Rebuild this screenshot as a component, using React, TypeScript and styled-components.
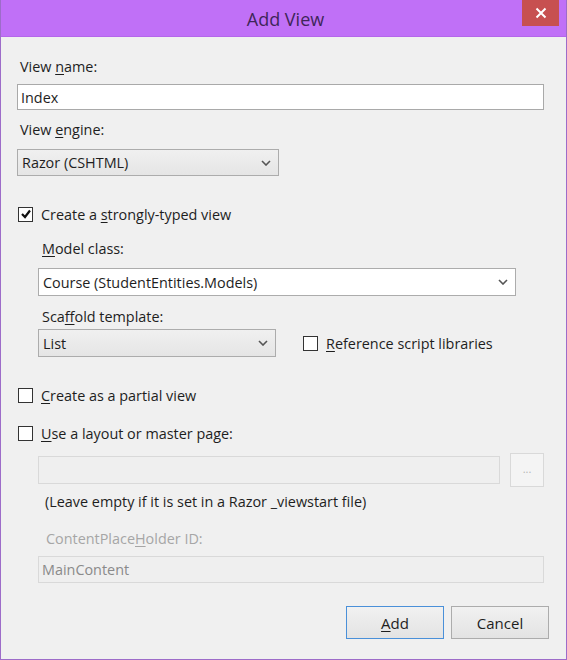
import React from "react";
import styled, { createGlobalStyle } from "styled-components";

const Global = createGlobalStyle`
  html, body { margin: 0; padding: 0; background: #f0f0f0; }
  body { font-family: "Open Sans", "Noto Sans", sans-serif; }
  * { box-sizing: border-box; }
`;

const Window = styled.div`
  width: 567px;
  height: 660px;
  display: flex;
  flex-direction: column;
  background: #f0f0f0;
  border: 1px solid #9d6cc9;
  border-top: none;
  font-family: "Open Sans", sans-serif;
  font-size: 14.4px;
  color: #1e1e1e;
`;

const TitleBar = styled.div`
  height: 37px;
  flex: none;
  background: #c070f7;
  display: flex;
  align-items: center;
  justify-content: center;
  position: relative;
  border-bottom: 1px solid #b466ea;
`;

const Title = styled.div`
  font-size: 18px;
  color: #3e2659;
  margin-left: 4px;
  margin-top: 1px;
`;

const CloseButton = styled.div`
  position: absolute;
  top: 0;
  right: 7px;
  width: 37px;
  height: 26px;
  background: #c75050;
  display: flex;
  align-items: center;
  justify-content: center;
`;

const Body = styled.div`
  flex: 1;
  display: flex;
  flex-direction: column;
  padding: 0 22px 0 16px;
`;

const Label = styled.div<{ $mt: number; $ml?: number; $disabled?: boolean }>`
  margin-top: ${(p) => p.$mt}px;
  margin-left: ${(p) => p.$ml ?? 3}px;
  height: 20px;
  line-height: 20px;
  color: ${(p) => (p.$disabled ? "#a6a6a6" : "#1e1e1e")};
  white-space: nowrap;
`;

const U = styled.span`
  text-decoration: underline;
  text-underline-offset: 2px;
`;

const TextBox = styled.div<{ $mt: number; $indent?: boolean; $disabled?: boolean; $h?: number }>`
  margin-top: ${(p) => p.$mt}px;
  margin-left: ${(p) => (p.$indent ? 21 : 0)}px;
  height: ${(p) => p.$h ?? 26}px;
  background: ${(p) => (p.$disabled ? "#efefef" : "#ffffff")};
  border: 1px solid ${(p) => (p.$disabled ? "#d9d9d9" : "#a9a9a9")};
  padding-left: 3px;
  display: flex;
  align-items: center;
  color: ${(p) => (p.$disabled ? "#8a8a8a" : "#1e1e1e")};
`;

const Select = styled.div<{ $mt: number; $w?: number; $indent?: boolean; $white?: boolean; $h?: number; $mr?: number }>`
  margin-top: ${(p) => p.$mt}px;
  margin-left: ${(p) => (p.$indent ? 21 : 0)}px;
  margin-right: ${(p) => p.$mr ?? 0}px;
  width: ${(p) => (p.$w ? `${p.$w}px` : "auto")};
  height: ${(p) => p.$h ?? 27}px;
  flex: none;
  border: 1px solid #acacac;
  background: ${(p) => (p.$white ? "#ffffff" : "linear-gradient(#f0f0f0, #e5e5e5)")};
  display: flex;
  align-items: center;
  justify-content: space-between;
  padding: 0 7px 0 4px;
`;

const CheckRow = styled.div<{ $mt: number }>`
  margin-top: ${(p) => p.$mt}px;
  height: 20px;
  display: flex;
  align-items: center;
  gap: 8px;
  margin-left: 1px;
  white-space: nowrap;
`;

const Box = styled.div`
  width: 15px;
  height: 15px;
  border: 1px solid #333;
  background: #fff;
  display: flex;
  align-items: center;
  justify-content: center;
  flex: none;
`;

const ScaffoldRow = styled.div`
  margin-top: 2px;
  margin-left: 21px;
  display: flex;
  align-items: center;
  gap: 27px;
`;

const InlineCheck = styled.div`
  display: flex;
  align-items: center;
  gap: 8px;
  white-space: nowrap;
`;

const LayoutRow = styled.div`
  margin-top: 10px;
  margin-left: 21px;
  height: 34px;
  display: flex;
  align-items: center;
  gap: 10px;
`;

const DisabledField = styled.div`
  flex: 1;
  height: 28px;
  background: #efefef;
  border: 1px solid #d9d9d9;
`;

const BrowseButton = styled.div`
  width: 34px;
  height: 34px;
  border: 1px solid #d9d9d9;
  background: #f4f4f4;
  color: #b5b5b5;
  font-size: 11px;
  display: flex;
  align-items: center;
  justify-content: center;
  padding-bottom: 4px;
`;

const Note = styled.div`
  margin-top: 5px;
  margin-left: 28px;
  height: 20px;
  line-height: 20px;
  white-space: nowrap;
`;

const ButtonRow = styled.div`
  margin-top: 23px;
  display: flex;
  justify-content: flex-end;
  gap: 7px;
  margin-right: -5px;
`;

const Button = styled.div<{ $default?: boolean }>`
  width: 98px;
  height: 33px;
  border: 1px solid ${(p) => (p.$default ? "#4a90d9" : "#acacac")};
  background: linear-gradient(#f1f1f1, #e3e3e3);
  display: flex;
  align-items: center;
  justify-content: center;
  font-size: 15px;
`;

const Chevron = () => (
  <svg width="10" height="6" viewBox="0 0 10 6">
    <path d="M1 1 L5 5 L9 1" fill="none" stroke="#555" strokeWidth="1.6" />
  </svg>
);

const Check = () => (
  <svg width="12" height="12" viewBox="0 0 12 12">
    <path d="M2 6 L5 9 L10 2.5" fill="none" stroke="#111" strokeWidth="2.2" />
  </svg>
);

export default function App() {
  return (
    <>
      <Global />
      <Window>
        <TitleBar>
          <Title>Add View</Title>
          <CloseButton>
            <svg width="12" height="12" viewBox="0 0 12 12">
              <path d="M1.5 1.5 L10.5 10.5 M10.5 1.5 L1.5 10.5" stroke="#fff" strokeWidth="2" />
            </svg>
          </CloseButton>
        </TitleBar>
        <Body>
          <Label $mt={20}>
            View <U>n</U>ame:
          </Label>
          <TextBox $mt={7}>Index</TextBox>
          <Label $mt={10}>
            View <U>e</U>ngine:
          </Label>
          <Select $mt={9} $w={262}>
            <span>Razor (CSHTML)</span>
            <Chevron />
          </Select>
          <CheckRow $mt={28}>
            <Box>
              <Check />
            </Box>
            <span>
              Create a <U>s</U>trongly-typed view
            </span>
          </CheckRow>
          <Label $mt={15} $ml={25}>
            <U>M</U>odel class:
          </Label>
          <Select $mt={9} $indent $white $h={28} $mr={28}>
            <span>Course (StudentEntities.Models)</span>
            <Chevron />
          </Select>
          <Label $mt={11} $ml={25}>
            Sca<U>f</U>fold template:
          </Label>
          <ScaffoldRow>
            <Select $mt={0} $w={238} $h={28}>
              <span>List</span>
              <Chevron />
            </Select>
            <InlineCheck>
              <Box />
              <span>
                <U>R</U>eference script libraries
              </span>
            </InlineCheck>
          </ScaffoldRow>
          <CheckRow $mt={28}>
            <Box />
            <span>
              <U>C</U>reate as a partial view
            </span>
          </CheckRow>
          <CheckRow $mt={18}>
            <Box />
            <span>
              <U>U</U>se a layout or master page:
            </span>
          </CheckRow>
          <LayoutRow>
            <DisabledField />
            <BrowseButton>...</BrowseButton>
          </LayoutRow>
          <Note>(Leave empty if it is set in a Razor _viewstart file)</Note>
          <Label $mt={17} $ml={29} $disabled>
            ContentPlace<U>H</U>older ID:
          </Label>
          <TextBox $mt={7} $indent $disabled $h={27}>
            MainContent
          </TextBox>
          <ButtonRow>
            <Button $default>
              <span>
                <U>A</U>dd
              </span>
            </Button>
            <Button>Cancel</Button>
          </ButtonRow>
        </Body>
      </Window>
    </>
  );
}
